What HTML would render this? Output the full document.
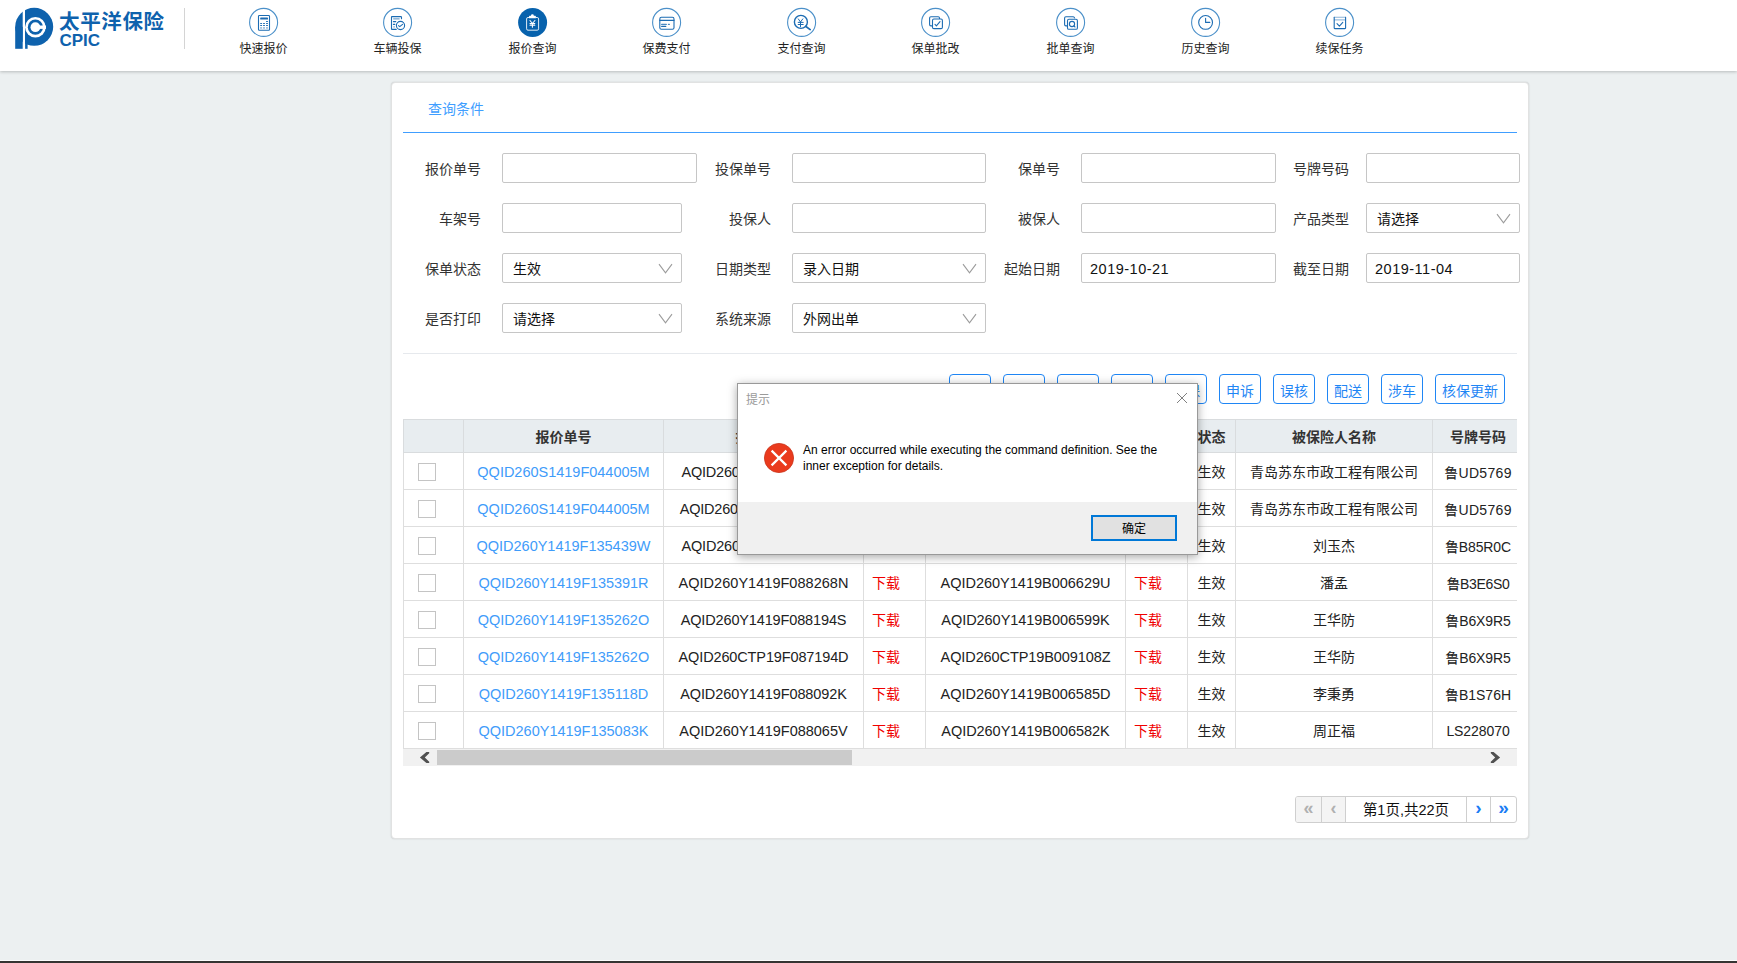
<!DOCTYPE html>
<html lang="zh-CN">
<head>
<meta charset="utf-8">
<title>报价查询</title>
<style>
*{box-sizing:border-box;margin:0;padding:0}
html,body{width:1737px;height:963px;overflow:hidden}
body{background:#ecf0f1;font-family:"Liberation Sans","Noto Sans CJK SC",sans-serif;color:#333;position:relative;font-size:14px}
.abs{position:absolute}
#hdr{position:absolute;left:0;top:0;width:1737px;height:71px;background:#fff;box-shadow:0 1px 3px rgba(0,0,0,.22)}
#logo{position:absolute;left:8px;top:2px}
#lt1{position:absolute;left:59px;top:7px;font-size:20.5px;line-height:30px;font-weight:bold;color:#0e62ad;letter-spacing:.65px;white-space:nowrap}
#lt2{position:absolute;left:59.5px;top:32.3px;font-size:17px;line-height:18px;font-weight:bold;color:#0e62ad;letter-spacing:0}
#hdiv{position:absolute;left:184px;top:8px;width:1px;height:41px;background:#d4d4d4}
.nav{position:absolute;top:0;width:120px;height:70px;text-align:center}
.nav svg{position:absolute;left:39.4px;top:2px}
.nav .lb{position:absolute;left:0;top:40.3px;width:120px;font-size:12px;line-height:18px;color:#222}
#card{position:absolute;left:391px;top:82px;width:1138px;height:757px;background:#fff;border:1px solid #e1e2e2;border-radius:4px;box-shadow:0 0 1.5px rgba(0,0,0,.2)}
#ttl{position:absolute;left:428px;top:99px;font-size:14px;line-height:20px;color:#409eff}
#bl{position:absolute;left:403px;top:132px;width:1114px;height:1px;background:#409eff}
#gl{position:absolute;left:403px;top:353px;width:1114px;height:1px;background:#e6e9ed}
.fl{position:absolute;width:90px;text-align:right;font-size:14px;line-height:20px;color:#333;white-space:nowrap}
.fi{position:absolute;height:30px;border:1px solid #c6c6c6;border-radius:2px;background:#fff;font-size:14px;line-height:30px;padding-left:10px;color:#111;white-space:nowrap}
.fi.en{font-size:14.5px;padding-left:8px;letter-spacing:.5px}
.fi svg{position:absolute;right:8px;top:8.8px;width:15px;height:11px}
.bt{position:absolute;top:374px;height:30px;border:1px solid #1f86f5;border-radius:4px;color:#1f86f5;font-size:14px;line-height:32px;text-align:center;background:#fff;white-space:nowrap}
#tbl{position:absolute;left:403px;top:419px;width:1114px;height:330px;overflow:hidden}
#tbl table{border-collapse:collapse;table-layout:fixed;width:1121px}
#tbl th{height:33px;background:#e8edf0;border:1px solid #d9dcde;font-size:14px;font-weight:bold;color:#333;text-align:center;white-space:nowrap;padding:0}
#tbl td{height:37px;border:1px solid #dedede;font-size:14px;color:#222;text-align:center;white-space:nowrap;padding:0;overflow:hidden}
#tbl td.en,#tbl td.lk{font-size:14.5px;padding-top:2px}
#tbl td.pl{padding-top:1px}
#tbl td.lk{color:#3f9cfa}
#tbl td.dl{color:#f00000;text-align:left;padding-left:8px}
#tbl td.pl{font-size:14px}
.cb{display:inline-block;width:18px;height:18px;border:1px solid #c4c4c4;background:#fff;vertical-align:middle;margin-left:-13px;position:relative;top:1px}
#sb{position:absolute;left:403px;top:749px;width:1114px;height:17px;background:#f1f1f1}
#th{position:absolute;left:34px;top:1px;width:415px;height:15px;background:#cbcbcb}
#pg{position:absolute;left:1295px;top:796px;width:222px;height:27px;border:1px solid #cfcfcf;border-radius:3px;background:#fff;overflow:hidden;white-space:nowrap;font-size:0}
.pc{display:inline-block;height:25px;line-height:24px;text-align:center;border-right:1px solid #cfcfcf;font-size:14px;vertical-align:top}
.pc.g{background:#f4f4f4;color:#b0b0b0;font-size:18px;line-height:23px;font-weight:bold}
.pc.b{color:#1a7cf4;font-size:19px;line-height:22px;font-weight:bold}
.pc.t{color:#111;font-size:14.5px;line-height:26px}
#dlg{position:absolute;left:737px;top:383px;width:461px;height:172px;background:#fff;border:1px solid #999;box-shadow:0 2px 9px rgba(0,0,0,.35)}
#dt{position:absolute;left:8px;top:6.5px;font-size:12px;line-height:18px;color:#9a9a9a}
#dx{position:absolute;left:438px;top:8px}
#di{position:absolute;left:25px;top:58px}
#dm{position:absolute;left:65px;top:58px;font-size:12px;line-height:16px;color:#000;white-space:nowrap;letter-spacing:0}
#df{position:absolute;left:0;top:118px;width:459px;height:52px;background:#f0f0f0}
#ok{position:absolute;left:353px;top:13px;width:86px;height:26px;border:2px solid #0078d7;background:#e1e1e1;font-size:12px;line-height:24.5px;text-align:center;color:#000}
</style>
</head>
<body>
<div id="hdr">
<svg id="logo" width="60" height="54" viewBox="0 0 60 54"><defs><clipPath id="cl"><rect x="0" y="0" width="14.7" height="60"/></clipPath><clipPath id="cr"><rect x="17.1" y="0" width="43" height="60"/></clipPath></defs>
<g fill="#0e62ad"><g clip-path="url(#cl)"><circle cx="26.2" cy="24.85" r="19"/><rect x="7.2" y="24.85" width="8" height="21.95"/></g>
<g clip-path="url(#cr)"><circle cx="26.2" cy="24.85" r="19"/><rect x="17.1" y="24.85" width="2.5" height="21.95"/></g></g>
<circle cx="27.4" cy="25.2" r="10.3" fill="#fff"/><circle cx="27.4" cy="25.2" r="7.6" fill="#0e62ad"/><circle cx="27.4" cy="25.2" r="4.9" fill="#fff"/><path d="M30.4 23.5 H38 V26.9 H30.4 Z" fill="#fff"/></svg>
<div id="lt1">太平洋保险</div><div id="lt2">CPIC</div>
<div id="hdiv"></div>
<div class="nav" style="left:203.6px"><svg width="40" height="40" viewBox="0 0 40 40"><circle cx="20.6" cy="20.4" r="14" fill="#fff" stroke="#4b90c9" stroke-width="1.1"/><g fill="none" stroke="#1c6cb3" stroke-width="1.1"><rect x="15.5" y="13.5" width="11" height="14.8" rx="0.8"/></g>
<g fill="#1c6cb3"><rect x="17.2" y="15.4" width="7.8" height="2.2" rx="0.6"/><rect x="23" y="19" width="2" height="1" rx=".5"/>
<rect x="17.1" y="20.9" width="2" height="1.1" rx=".5"/><rect x="20" y="20.9" width="2" height="1.1" rx=".5"/><rect x="23" y="20.9" width="2" height="1.1" rx=".5"/>
<rect x="17.1" y="23" width="2" height="1" rx=".5"/><rect x="20" y="23" width="2" height="1" rx=".5"/><rect x="23" y="23" width="2" height="1" rx=".5"/>
<g opacity=".45"><rect x="17.1" y="25.1" width="2" height="1.6"/><rect x="20" y="25.1" width="2" height="1.6"/><rect x="23" y="25.1" width="2" height="1.6"/></g></g></svg><div class="lb">快速报价</div></div>
<div class="nav" style="left:337.6px"><svg width="40" height="40" viewBox="0 0 40 40"><circle cx="20.6" cy="20.4" r="14" fill="#fff" stroke="#4b90c9" stroke-width="1.1"/><g fill="none" stroke="#1c6cb3" stroke-width="1.1" stroke-linecap="round" stroke-linejoin="round">
<path d="M24.5 16.8 V15.3 Q24.5 14.6 23.8 14.6 H14.9 Q14.5 14.6 14.5 15 V27 Q14.5 27.4 14.9 27.4 H19.2"/>
<path d="M16.4 19.6 H18.8 M16.4 22.4 H17.8"/>
<circle cx="23.5" cy="23.5" r="4.1"/><path d="M21.5 23.7 L22.7 24.7 L25.6 22.3"/></g>
<rect x="16.2" y="16.2" width="6.4" height="1.3" fill="#1c6cb3" opacity=".6"/><rect x="16.2" y="24.3" width="1.8" height="1.2" fill="#1c6cb3" opacity=".5"/></svg><div class="lb">车辆投保</div></div>
<div class="nav" style="left:472.6px"><svg width="40" height="40" viewBox="0 0 40 40"><circle cx="20.6" cy="20.4" r="14.5" fill="#0762ad"/><g fill="none" stroke="#fff" stroke-linecap="round" stroke-linejoin="round">
<path d="M16.6 15.5 H16 Q14.6 15.5 14.6 16.9 V26.8 Q14.6 28.2 16 28.2 H25.2 Q26.6 28.2 26.6 26.8 V16.9 Q26.6 15.5 25.2 15.5 H24.4" stroke-width=".95" opacity=".92"/>
<path d="M18 18.5 L20.4 21.5 L22.9 18.5 M18 21.6 H22.8 M18 23.3 H22.8 M20.4 21.5 V25.2" stroke-width="1.05"/></g>
<path d="M17 16.3 V14.5 Q17 13.8 17.7 13.8 H19 V13.4 Q19 12.2 20.4 12.2 Q21.8 12.2 21.8 13.4 V13.8 H23.2 Q23.9 13.8 23.9 14.5 V16.3 Z" fill="#fff"/></svg><div class="lb">报价查询</div></div>
<div class="nav" style="left:606.6px"><svg width="40" height="40" viewBox="0 0 40 40"><circle cx="20.6" cy="20.4" r="14" fill="#fff" stroke="#4b90c9" stroke-width="1.1"/><g fill="none" stroke="#1c6cb3" stroke-width="1.1" stroke-linecap="round" stroke-linejoin="round">
<rect x="13.8" y="15.3" width="14.2" height="12" rx="1.6"/><path d="M13.8 18.3 H28" stroke-width="1.2"/>
<path d="M15.6 22.4 H20.4 M22.4 22.4 H23.4" opacity=".8"/><path d="M15.6 24.4 H19.8"/></g></svg><div class="lb">保费支付</div></div>
<div class="nav" style="left:741.6px"><svg width="40" height="40" viewBox="0 0 40 40"><circle cx="20.6" cy="20.4" r="14" fill="#fff" stroke="#4b90c9" stroke-width="1.1"/><g fill="none" stroke="#1c6cb3" stroke-linecap="round" stroke-linejoin="round">
<circle cx="19.9" cy="19.9" r="6.5" stroke-width="1.4"/><path d="M24.9 24.5 L29.2 27.6" stroke-width="1.7"/>
<path d="M17.3 16.9 L19.5 20 L21.8 16.9 M17.2 20.4 H22.2 M17.2 22.5 H22.2 M19.5 20 V24.8" stroke-width="1"/></g></svg><div class="lb">支付查询</div></div>
<div class="nav" style="left:875.6px"><svg width="40" height="40" viewBox="0 0 40 40"><circle cx="20.6" cy="20.4" r="14" fill="#fff" stroke="#4b90c9" stroke-width="1.1"/><g fill="none" stroke="#1c6cb3" stroke-width="1.1" stroke-linecap="round" stroke-linejoin="round">
<path d="M24.5 16.4 V16 Q24.5 14.7 23.2 14.7 H15.9 Q14.6 14.7 14.6 16 V22.6 Q14.6 23.9 15.9 23.9 H16.8"/>
<rect x="17.5" y="17" width="9.9" height="9.6" rx="1.4"/><path d="M20 22.4 L21.4 23.8 L25 19.6"/></g></svg><div class="lb">保单批改</div></div>
<div class="nav" style="left:1010.6px"><svg width="40" height="40" viewBox="0 0 40 40"><circle cx="20.6" cy="20.4" r="14" fill="#fff" stroke="#4b90c9" stroke-width="1.1"/><g fill="none" stroke="#1c6cb3" stroke-width="1.1" stroke-linecap="round" stroke-linejoin="round">
<path d="M24.5 15.9 Q24.3 14.7 23.2 14.7 H15.9 Q14.6 14.7 14.6 16 V22.6 Q14.6 23.9 15.9 23.9 H16.8"/>
<rect x="17.5" y="17.3" width="9.9" height="10" rx="1.4"/><circle cx="22" cy="22" r="2.6"/><path d="M23.9 23.9 L25 25"/></g></svg><div class="lb">批单查询</div></div>
<div class="nav" style="left:1145.5px"><svg width="40" height="40" viewBox="0 0 40 40"><circle cx="20.6" cy="20.4" r="14" fill="#fff" stroke="#4b90c9" stroke-width="1.1"/><g fill="none" stroke="#1c6cb3" stroke-width="1.1" stroke-linecap="round" stroke-linejoin="round"><circle cx="20.6" cy="20.4" r="6.9"/><path d="M20.6 16.3 V20.4 H24.8"/></g></svg><div class="lb">历史查询</div></div>
<div class="nav" style="left:1279.6px"><svg width="40" height="40" viewBox="0 0 40 40"><circle cx="20.6" cy="20.4" r="14" fill="#fff" stroke="#4b90c9" stroke-width="1.1"/><g fill="none" stroke="#1c6cb3" stroke-width="1.1" stroke-linecap="round" stroke-linejoin="round">
<path d="M15.2 15.4 V26 Q15.2 26.6 15.8 26.6 H26 Q26.6 26.6 26.6 26 V15.4"/><path d="M15.2 15.2 H26.6" opacity=".5"/>
<path d="M15.4 17.9 H26.4" opacity=".45" stroke-width="1.3"/><path d="M18 21.7 L20.4 24.2 L23.8 20.4"/></g></svg><div class="lb">续保任务</div></div>
</div>
<div id="card"></div>
<div id="ttl">查询条件</div>
<div id="bl"></div>
<div id="gl"></div>
<div class="fl" style="left:391px;top:159px">报价单号</div>
<div class="fi" style="left:502px;top:153px;width:195px"></div>
<div class="fl" style="left:391px;top:209px">车架号</div>
<div class="fi" style="left:502px;top:203px;width:180px"></div>
<div class="fl" style="left:391px;top:259px">保单状态</div>
<div class="fi" style="left:502px;top:253px;width:180px">生效<svg viewBox="0 0 15 11"><path d="M1 1.2 L7.5 9.8 L14 1.2" fill="none" stroke="#9c9c9c" stroke-width="1.1"/></svg></div>
<div class="fl" style="left:391px;top:309px">是否打印</div>
<div class="fi" style="left:502px;top:303px;width:180px">请选择<svg viewBox="0 0 15 11"><path d="M1 1.2 L7.5 9.8 L14 1.2" fill="none" stroke="#9c9c9c" stroke-width="1.1"/></svg></div>
<div class="fl" style="left:681px;top:159px">投保单号</div>
<div class="fi" style="left:792px;top:153px;width:194px"></div>
<div class="fl" style="left:681px;top:209px">投保人</div>
<div class="fi" style="left:792px;top:203px;width:194px"></div>
<div class="fl" style="left:681px;top:259px">日期类型</div>
<div class="fi" style="left:792px;top:253px;width:194px">录入日期<svg viewBox="0 0 15 11"><path d="M1 1.2 L7.5 9.8 L14 1.2" fill="none" stroke="#9c9c9c" stroke-width="1.1"/></svg></div>
<div class="fl" style="left:681px;top:309px">系统来源</div>
<div class="fi" style="left:792px;top:303px;width:194px">外网出单<svg viewBox="0 0 15 11"><path d="M1 1.2 L7.5 9.8 L14 1.2" fill="none" stroke="#9c9c9c" stroke-width="1.1"/></svg></div>
<div class="fl" style="left:970px;top:159px">保单号</div>
<div class="fi" style="left:1081px;top:153px;width:195px"></div>
<div class="fl" style="left:970px;top:209px">被保人</div>
<div class="fi" style="left:1081px;top:203px;width:195px"></div>
<div class="fl" style="left:970px;top:259px">起始日期</div>
<div class="fi en" style="left:1081px;top:253px;width:195px">2019-10-21</div>
<div class="fl" style="left:1259px;top:159px">号牌号码</div>
<div class="fi" style="left:1366px;top:153px;width:154px"></div>
<div class="fl" style="left:1259px;top:209px">产品类型</div>
<div class="fi" style="left:1366px;top:203px;width:154px">请选择<svg viewBox="0 0 15 11"><path d="M1 1.2 L7.5 9.8 L14 1.2" fill="none" stroke="#9c9c9c" stroke-width="1.1"/></svg></div>
<div class="fl" style="left:1259px;top:259px">截至日期</div>
<div class="fi en" style="left:1366px;top:253px;width:154px">2019-11-04</div>

<div class="bt" style="left:949px;width:42px">查询</div>
<div class="bt" style="left:1003px;width:42px">重置</div>
<div class="bt" style="left:1057px;width:42px">导出</div>
<div class="bt" style="left:1111px;width:42px">打印</div>
<div class="bt" style="left:1165px;width:42px">续保</div>
<div class="bt" style="left:1219px;width:42px">申诉</div>
<div class="bt" style="left:1273px;width:42px">误核</div>
<div class="bt" style="left:1327px;width:42px">配送</div>
<div class="bt" style="left:1381px;width:42px">涉车</div>
<div class="bt" style="left:1435px;width:70px">核保更新</div>

<div id="tbl"><table><colgroup><col style="width:60px"><col style="width:200px"><col style="width:200px"><col style="width:62px"><col style="width:200px"><col style="width:62px"><col style="width:48px"><col style="width:197px"><col style="width:91px"></colgroup>
<thead><tr><th></th><th>报价单号</th><th>投保单号</th><th>投保单</th><th>保单号</th><th>保单</th><th>状态</th><th>被保险人名称</th><th>号牌号码</th></tr></thead>
<tbody>
<tr><td><span class="cb"></span></td><td class="lk" style="letter-spacing:-0.01px">QQID260S1419F044005M</td><td class="en" style="letter-spacing:-0.23px">AQID260S1419F029101X</td><td class="dl">下载</td><td class="en" style="letter-spacing:-0.10px">AQID260S1419B002411C</td><td class="dl">下载</td><td>生效</td><td>青岛苏东市政工程有限公司</td><td class="pl" style="letter-spacing:0.32px">鲁UD5769</td></tr>
<tr><td><span class="cb"></span></td><td class="lk" style="letter-spacing:-0.01px">QQID260S1419F044005M</td><td class="en" style="letter-spacing:-0.20px">AQID260CTP19F087561A</td><td class="dl">下载</td><td class="en" style="letter-spacing:-0.13px">AQID260CTP19B009140B</td><td class="dl">下载</td><td>生效</td><td>青岛苏东市政工程有限公司</td><td class="pl" style="letter-spacing:0.32px">鲁UD5769</td></tr>
<tr><td><span class="cb"></span></td><td class="lk" style="letter-spacing:-0.01px">QQID260Y1419F135439W</td><td class="en" style="letter-spacing:-0.18px">AQID260Y1419F088301T</td><td class="dl">下载</td><td class="en" style="letter-spacing:-0.09px">AQID260Y1419B006652R</td><td class="dl">下载</td><td>生效</td><td>刘玉杰</td><td class="pl" style="letter-spacing:-0.13px">鲁B85R0C</td></tr>
<tr><td><span class="cb"></span></td><td class="lk" style="letter-spacing:-0.05px">QQID260Y1419F135391R</td><td class="en" style="letter-spacing:0.03px">AQID260Y1419F088268N</td><td class="dl">下载</td><td class="en" style="letter-spacing:-0.01px">AQID260Y1419B006629U</td><td class="dl">下载</td><td>生效</td><td>潘孟</td><td class="pl" style="letter-spacing:-0.31px">鲁B3E6S0</td></tr>
<tr><td><span class="cb"></span></td><td class="lk" style="letter-spacing:-0.02px">QQID260Y1419F135262O</td><td class="en" style="letter-spacing:-0.14px">AQID260Y1419F088194S</td><td class="dl">下载</td><td class="en" style="letter-spacing:-0.05px">AQID260Y1419B006599K</td><td class="dl">下载</td><td>生效</td><td>王华防</td><td class="pl" style="letter-spacing:-0.11px">鲁B6X9R5</td></tr>
<tr><td><span class="cb"></span></td><td class="lk" style="letter-spacing:-0.02px">QQID260Y1419F135262O</td><td class="en" style="letter-spacing:-0.13px">AQID260CTP19F087194D</td><td class="dl">下载</td><td class="en" style="letter-spacing:-0.09px">AQID260CTP19B009108Z</td><td class="dl">下载</td><td>生效</td><td>王华防</td><td class="pl" style="letter-spacing:-0.11px">鲁B6X9R5</td></tr>
<tr><td><span class="cb"></span></td><td class="lk" style="letter-spacing:-0.02px">QQID260Y1419F135118D</td><td class="en" style="letter-spacing:-0.09px">AQID260Y1419F088092K</td><td class="dl">下载</td><td class="en" style="letter-spacing:-0.01px">AQID260Y1419B006585D</td><td class="dl">下载</td><td>生效</td><td>李秉勇</td><td class="pl" style="letter-spacing:-0.02px">鲁B1S76H</td></tr>
<tr><td><span class="cb"></span></td><td class="lk" style="letter-spacing:-0.01px">QQID260Y1419F135083K</td><td class="en" style="letter-spacing:-0.01px">AQID260Y1419F088065V</td><td class="dl">下载</td><td class="en" style="letter-spacing:-0.05px">AQID260Y1419B006582K</td><td class="dl">下载</td><td>生效</td><td>周正福</td><td class="pl" style="letter-spacing:-0.08px">LS228070</td></tr>
</tbody></table></div>
<div id="sb"><div id="th"></div><svg class="abs" style="left:0;top:0" width="1114" height="17" viewBox="0 0 1114 17"><g fill="#505050"><polygon points="16.9,8.5 23.4,2.9 26.2,2.9 26.2,4.3 21.8,8.5 26.2,12.7 26.2,14.1 23.4,14.1"/><polygon points="1097.1,8.5 1090.6,2.9 1087.8,2.9 1087.8,4.3 1092.2,8.5 1087.8,12.7 1087.8,14.1 1090.6,14.1"/></g></svg></div>

<div id="pg"><span class="pc g" style="width:26px">«</span><span class="pc g" style="width:24px">‹</span><span class="pc t" style="width:121px">第1页,共22页</span><span class="pc b" style="width:24px">›</span><span class="pc b" style="width:25px;border-right:0">»</span></div>

<div id="dlg">
<div id="dt">提示</div>
<svg id="dx" width="12" height="12" viewBox="0 0 12 12"><path d="M1 1 L11 11 M11 1 L1 11" stroke="#808080" stroke-width="1" fill="none"/></svg>
<svg id="di" width="32" height="32" viewBox="0 0 32 32"><circle cx="16" cy="16" r="14.6" fill="#ea3a1d" stroke="#c9331b" stroke-width=".8"/><path d="M8.6 8.6 L23.4 23.4 M23.4 8.6 L8.6 23.4" stroke="#fff" stroke-width="2.2" fill="none"/></svg>
<div id="dm">An error occurred while executing the command definition. See the<br>inner exception for details.</div>
<div id="df"><div id="ok">确定</div></div>
</div>

<div class="abs" style="left:0;top:960px;width:1737px;height:1px;background:#fbfcfc"></div>
<div class="abs" style="left:0;top:961px;width:1737px;height:2px;background:#363432"></div>
</body>
</html>
